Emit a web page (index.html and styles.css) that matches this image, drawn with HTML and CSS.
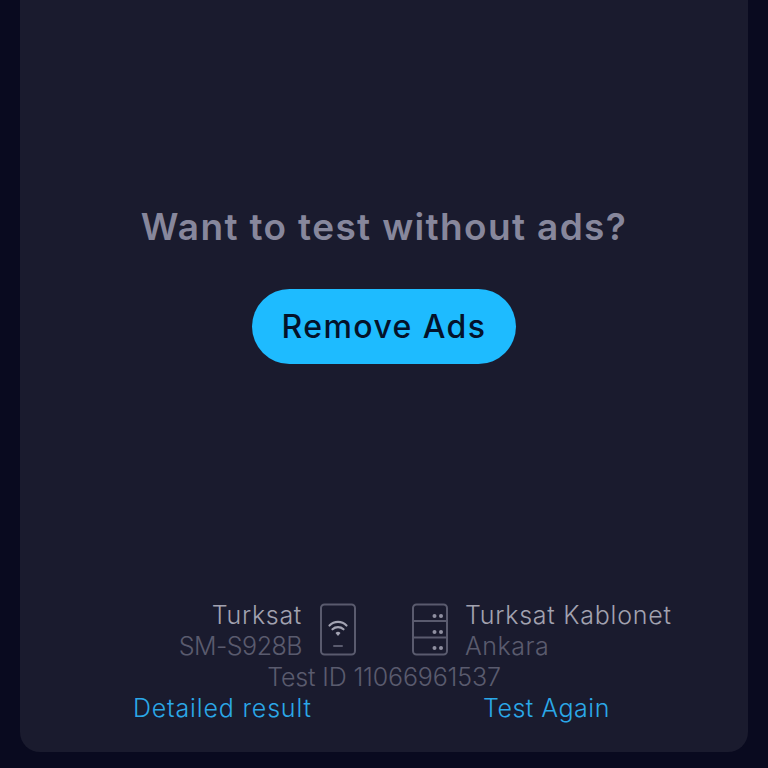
FILE: index.html
```html
<!DOCTYPE html>
<html lang="en">
<head>
<meta charset="utf-8">
<title>Speed test result</title>
<link rel="stylesheet" href="styles.css">
</head>
<body>
<main class="card">
  <section class="promo">
    <h1 class="promo-title">Want to test without ads?</h1>
    <button class="remove-btn">Remove Ads</button>
  </section>
  <section class="info">
    <div class="conn">
      <div class="side side-left">
        <div class="primary sp-turksat">Turksat</div>
        <div class="secondary sp-model">SM-S928B</div>
      </div>
      <svg class="icon" width="38" height="53" viewBox="0 0 38 53" fill="none">
        <rect x="2" y="1.5" width="34" height="50" rx="3.5" stroke="#5a5b6e" stroke-width="2"/>
        <path d="M10.500 22.500a12 12 0 0 1 17 0M13.500 26.300a8 8 0 0 1 11 0" stroke="#a3a3b2" stroke-width="2.200" stroke-linecap="round"/>
        <path d="M16.500 30a3.600 3.600 0 0 1 5 0L19 33z" fill="#a3a3b2"/>
        <path d="M15 43h8" stroke="#5a5b6e" stroke-width="2" stroke-linecap="round"/>
      </svg>
      <svg class="icon icon-server" width="38" height="53" viewBox="0 0 38 53" fill="none">
        <rect x="2" y="1.5" width="34" height="50" rx="3.5" stroke="#5a5b6e" stroke-width="2"/>
        <path d="M2 18h34M2 34.500h34" stroke="#5a5b6e" stroke-width="2"/>
        <g fill="#8f8fa0">
          <circle cx="23.500" cy="13" r="2"/><circle cx="30" cy="13" r="2"/>
          <circle cx="23.500" cy="29" r="2"/><circle cx="30" cy="29" r="2"/>
          <circle cx="23.500" cy="45" r="2"/><circle cx="30" cy="45" r="2"/>
        </g>
      </svg>
      <div class="side">
        <div class="primary sp-isp">Turksat Kablonet</div>
        <div class="secondary sp-city">Ankara</div>
      </div>
    </div>
    <div class="test-id">Test ID 11066961537</div>
    <div class="links">
      <a class="link link-detail">Detailed result</a>
      <a class="link link-again">Test Again</a>
    </div>
  </section>
</main>
</body>
</html>
```
FILE: styles.css
```css
* { box-sizing: border-box; }
html, body { margin: 0; height: 768px; overflow: hidden; }
body {
  background: #090a1f;
  font-family: Inter, "Noto Sans", sans-serif;
}
.card {
  height: 752px;
  margin: 0 20px;
  background: #1a1b2e;
  border-radius: 0 0 20px 20px;
  display: flex;
  flex-direction: column;
  align-items: center;
}
.promo {
  padding-top: 206px;
  display: flex;
  flex-direction: column;
  align-items: center;
}
.promo-title {
  margin: 0;
  font-size: 37px;
  line-height: 42px;
  font-weight: 600;
  letter-spacing: 1.35px;
  color: #87879c;
  white-space: nowrap;
}
.remove-btn {
  margin-top: 41px;
  width: 264px;
  height: 75px;
  padding: 0;
  border: 0;
  border-radius: 37.5px;
  background: #1ebbff;
  color: #04122a;
  font: 500 32px Inter, sans-serif;
  letter-spacing: 1.4px;
}
.info {
  margin-top: auto;
  padding-bottom: 28px;
  width: 100%;
  display: flex;
  flex-direction: column;
}
.conn {
  display: flex;
  align-items: center;
  height: 62px;
}
.side { display: flex; flex-direction: column; font-size: 25px; line-height: 31px; white-space: nowrap; }
.side-left { width: 282px; text-align: right; align-items: flex-end; }
.primary { color: #a2a2b0; font-weight: 300; }
.secondary { color: #5a5b6e; font-weight: 300; }
.sp-turksat { letter-spacing: 0.7px; }
.sp-model { letter-spacing: -0.5px; }
.sp-isp { letter-spacing: 0.75px; }
.sp-city { letter-spacing: 0.5px; }
.icon { margin-left: 17px; margin-bottom: 3px; flex: none; }
.icon-server { margin-left: 54px; margin-right: 16px; }
.test-id {
  text-align: center;
  font-size: 25px;
  line-height: 31px;
  font-weight: 300;
  letter-spacing: -0.15px;
  color: #5a5b6e;
}
.links {
  display: flex;
  height: 31px;
  font-size: 25px;
  line-height: 31px;
  font-weight: 300;
  white-space: nowrap;
}
.link { color: #2ba8e8; }
.link-detail { margin-left: 113px; width: 350px; letter-spacing: 0.82px; }
.link-again { letter-spacing: 0.5px; }
```
